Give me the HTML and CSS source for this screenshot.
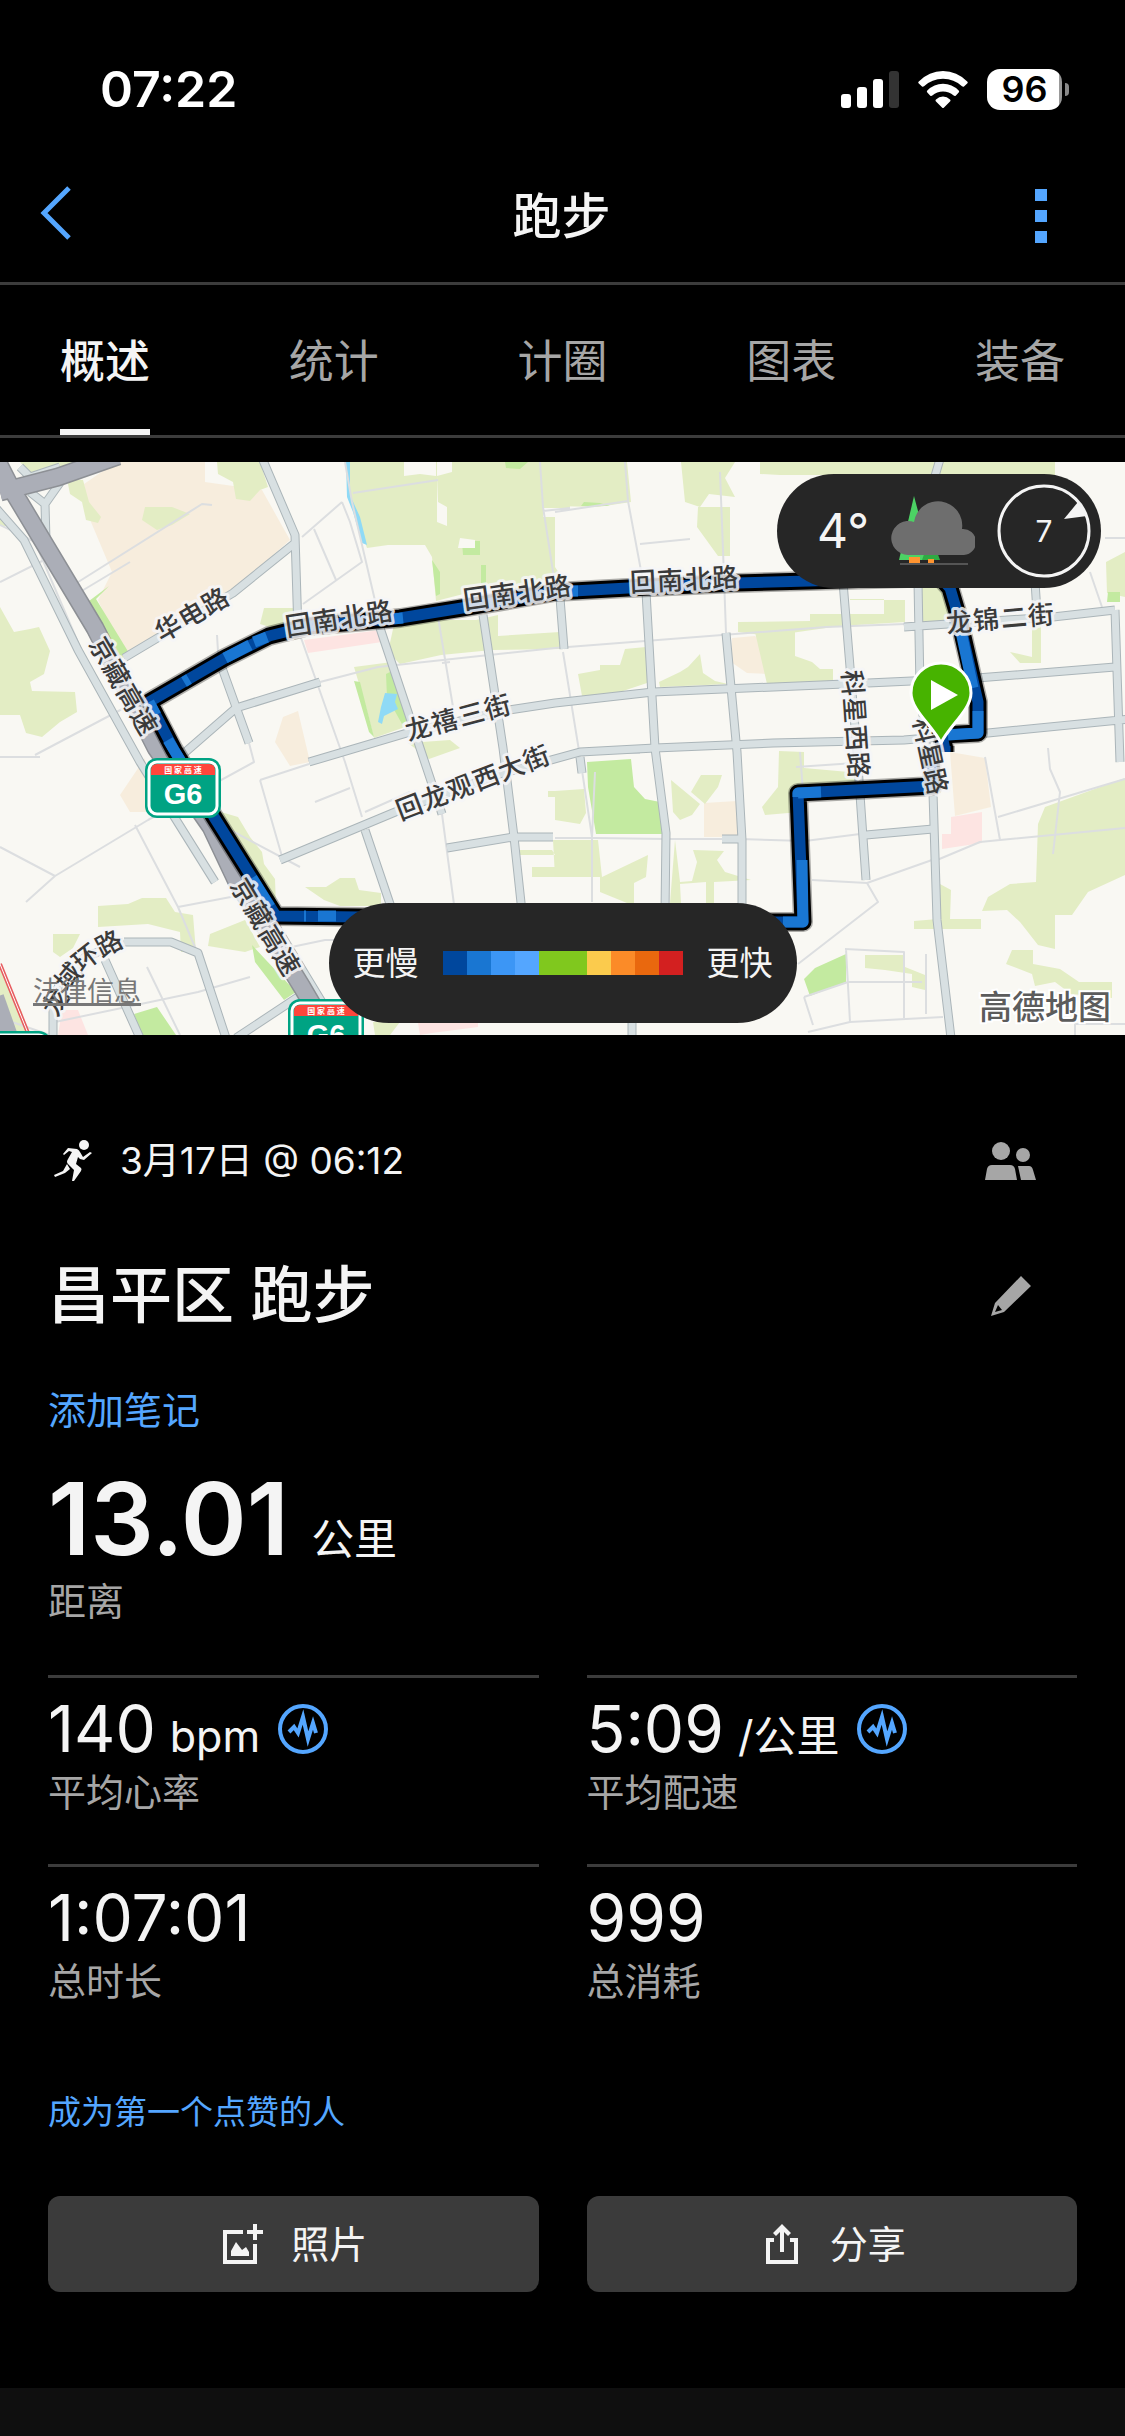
FILE: index.html
```html
<!DOCTYPE html>
<html lang="zh-CN">
<head>
<meta charset="utf-8">
<meta name="viewport" content="width=device-width">
<title>跑步</title>
<link rel="stylesheet" href="styles.css">
</head>
<body>
<div class="status">
  <time class="clock">07:22</time>
  <div class="indicators">
    <svg class="signal" width="58" height="37" viewBox="0 0 58 37" aria-hidden="true">
      <rect y="23" width="10" height="14" rx="3"/><rect x="16" y="16" width="10" height="21" rx="3"/><rect x="32" y="8" width="10" height="29" rx="3"/><rect class="dim" x="48" width="10" height="37" rx="3"/>
    </svg>
    <svg class="wifi" width="50" height="37" viewBox="0 0 50 37" aria-hidden="true">
      <path d="M0.800 10.600Q11 0 25 0T49.200 10.600Q50.300 11.600 49.200 12.600L46 15.400Q45 16 44 15.200Q36 7.700 25 7.700T6 15.200Q5 16 4 15.400L.8 12.600Q-.3 11.600.8 10.600Z"/>
      <path d="M9.300 19.500Q16 12.700 25 12.700T40.700 19.500Q41.700 20.600 40.700 21.600L37.700 24.700Q36.700 25.500 35.700 24.600Q31 20.500 25 20.500T14.300 24.600Q13.300 25.500 12.300 24.700L9.300 21.600Q8.300 20.600 9.300 19.500Z"/>
      <path d="M18 28.500Q21 25.500 25 25.500T32 28.500Q33 29.400 32 30.500L26 36.500Q25 37.500 24 36.500L18 30.500Q17 29.400 18 28.500Z"/>
    </svg>
    <div class="battery"><span class="charge">96</span><span class="nub"></span></div>
  </div>
</div>

<header class="titlebar">
  <button class="icon-button back" aria-label="返回">
    <svg width="32" height="54" viewBox="0 0 32 54"><path d="M29 2L4 27L29 52"/></svg>
  </button>
  <h1>跑步</h1>
  <button class="icon-button more" aria-label="更多">
    <svg width="12" height="54" viewBox="0 0 12 54"><path d="M0 0h12v12H0zM0 21h12v12H0zM0 42h12v12H0z"/></svg>
  </button>
</header>

<nav class="tabs">
  <a class="tab active" href="#overview">概述</a>
  <a class="tab" href="#stats">统计</a>
  <a class="tab" href="#laps">计圈</a>
  <a class="tab" href="#charts">图表</a>
  <a class="tab" href="#gear">装备</a>
</nav>

<section class="map">
  <svg class="map-canvas" viewBox="0 0 1125 573" aria-label="路线地图">
    <defs>
      <g id="roads">
        <path d="M262 -4L295 73L298 170M295 81L233 131L124 196M380 166L418 280L442 352M483 153L503 286L514 375L522 450M560 136L564 187M182 293L236 246L320 220M222 206L249 281"/>
        <path d="M309 300L407 271L509 248L555 241L653 230L868 221L977 216L1115 205M1115 148L1120 300M280 398L400 348L500 312L580 290L655 286L773 281L904 278L988 271L1130 257"/>
        <path d="M646 130L655 286L666 371L665 450M632 555V576M726 171L737 290L742 378V450M843 120L857 290L866 418M918 120L920 226L927 290L933 331M904 165L1053 155L1115 148M866 373L933 367M447 386L513 375H553M365 368L391 445"/>
        <path d="M124 480H171L198 491L226 576M105 498L140 576M124 480L85 495L60 520L53 540V576M236 576L298 535M940 -3L935 14M1035 120L1037 150M580 295L582 311M722 377H740M933 331L937 458L951 576"/>
      </g>
      <path id="highway" d="M-10 -15L11 26L95 166L156 286L211 365L236 418L302 525L340 590M0 30L58 15L118 -6"/>
      <path id="route" d="M945 284V290M930 285L933 324L798 331L803 460L773 460L276 454L214 355L174 288L149 240L225 196L269 174L309 164L400 156L462 146L555 130L628 126L737 121L809 119L940 115L950 126L958 153L978 240V271L942 273L945 288"/>
      <g id="shield">
        <rect width="76" height="60" rx="12" fill="#00a383"/><rect x="4" y="4" width="68" height="52" rx="8" fill="none" stroke="#fff" stroke-width="3"/>
        <path d="M6 17V12Q6 6 12 6H64Q70 6 70 12V17Z" fill="#ff463c"/>
        <text class="shield-name" x="38" y="15">国 家 高 速</text><text class="shield-number" x="38" y="46">G6</text>
      </g>
    </defs>
    <rect width="1125" height="573" fill="#f9f8f3"/>
    <g class="sand">
      <path d="M84 22L116 0H205V20L262 28L290 78L232 130L124 196L98 138L112 110L91 60Z"/>
      <path d="M275 280L283 255L298 249L310 300L290 304ZM145 296L120 333L130 350H148ZM732 176L755 174L769 185V212L747 211L731 200ZM704 341L737 339L739 375H704ZM950 290L985 296L991 345L955 354Z"/>
    </g>
    <g class="pink"><path d="M304 178L380 168L382 180L308 191ZM951 355L982 350V381L942 387V372H951ZM58 573L62 548H78L88 573ZM418 561H478V565L432 571L420 573Z"/></g>
    <g class="park">
      <path d="M0 -2H87L65 9L31 13L20 0ZM67 17L83 18L89 40L101 55L98 61L86 58L82 40L70 32ZM145 45H172L190 52L172 63L157 68L142 58ZM217 0H260L268 25L260 28L250 39L236 37L233 20L218 12Z"/>
      <path d="M350 0H570V46H543V55H555V105L570 127H483L436 139L432 95L425 83H388L367 86L350 40ZM264 146H298V174L260 162ZM395 158H476L498 153V174L560 170V187L492 188L441 193L400 202L388 190Z"/>
      <path d="M0 145L14 170L30 167L39 165L50 189L44 212L30 220L32 229L75 230L77 250L60 260L42 275L26 271L20 253H0ZM221 350L238 355L250 375L262 390L264 402L275 417L276 444L266 442L250 415ZM354 205L392 200L405 265L374 276L366 245Z"/>
      <path d="M98 444L128 442L142 436L166 436L175 450L193 453L196 490H181L180 470L148 462L98 465ZM53 472H80L73 486L60 495L53 490ZM305 425L326 425L340 416H355L359 428L381 431V444H340L324 438ZM210 472L245 458L260 485L245 490L208 484ZM408 281L450 278L460 286L429 297Z"/>
      <path d="M555 0H627L631 40L598 45L555 44ZM681 0H735L725 16L735 35L709 32L700 45L685 40ZM698 45H730V94H718L697 65ZM760 0H1055V13H780L760 12Z"/>
      <path d="M578 212L600 208V203H620L625 187L646 185L650 220L620 230L582 234ZM659 220L680 210L688 205L700 192L703 211L715 219L728 222L660 225ZM738 160L810 159V152H884V137H850V138H905V160L840 164L770 174L738 170ZM755 170H795V194L812 200L820 207H833V220L767 222Z"/>
      <path d="M918 126H945L950 155L918 170ZM1032 160H1041V201H1020L1010 190L1032 195ZM1106 100L1125 90V135L1107 131ZM671 318L700 342L692 353L680 358L673 350ZM701 313H722L718 325L705 342L691 330ZM779 289L804 290V306L860 311V329L798 325L800 350L765 353L762 345L778 325Z"/>
      <path d="M555 329L584 327L586 351L580 362L555 358ZM553 378H598L602 415L648 393L646 415L634 421V441H627L600 430V415H555ZM675 378L680 420L692 419L697 400L693 388L724 389L717 398L725 410L751 418L714 420V441H706V420L680 422L681 441H670ZM552 388H514V393H555ZM532 405H555V415H532ZM548 329H575V335H548Z"/>
      <path d="M1038 362L1045 345L1125 316V413L1088 430L1072 453H1055V487L1038 483L1020 460L1007 448L982 449L988 435L1010 422L1036 420ZM940 422L951 428L950 457H981V467H914V459L938 457ZM1006 502L1012 488H1033V502L1060 507L1079 520H1112V536L1071 532L1055 520L1035 524L1032 512ZM865 493H905V505L925 513V528L912 525V512L885 508L865 506ZM373 560H400L390 573H375Z"/>
      <path d="M0 505L22 550L26 573L0 565ZM0 50L15 64H0Z"/>
    </g>
    <g class="woods"><path d="M85 142L109 124L96 137L129 191L121 197L87 145ZM462 79H480V93H463ZM505 0H528L520 7L506 6ZM432 98L440 110V132L436 134ZM481 103H486V122H481ZM386 212L394 208L408 258L402 262L387 235ZM354 219L360 220L374 275L369 270ZM587 300L631 297L634 325L645 337L660 340L662 372H596L588 325ZM252 483L296 530L284 538L255 500ZM134 552L157 545L176 573H142ZM804 517L815 506L846 492V520L810 534ZM581 44H610L600 41L584 40ZM1108 130H1120V140H1107Z"/></g>
    <path class="bare" d="M404 0H436V14L420 12L404 14ZM437 14L452 10V0H437V60L447 64V45L438 40ZM460 76L475 78V86H458Z"/>
    <g class="water"><path d="M346 0H350V33L360 55L367 83L362 81L353 50L347 35ZM385 231L397 232L395 240L398 247L384 254L382 262L378 260L381 245Z"/></g>
    <g class="lanes">
      <path d="M353 31L438 18M345 0L352 40L380 160M342 40L302 75M314 67L336 118M303 142L362 100L350 60L342 40M75 122L202 42L212 43M80 130L130 100M0 120L60 90M35 293L126 245M0 295L40 295M540 0L543 45L565 187M543 49L570 46M300 173L345 300L362 355M320 220L378 205L555 186L826 165L905 162M217 173L219 206M249 281L254 300L148 358M148 358L55 414L0 385M55 414L26 440M135 363L178 445L197 490M178 445L236 434M260 318L283 398M260 318L309 302M555 50L628 39L645 130M628 39L625 0M720 10L723 88L726 171M640 82L690 77M442 352L455 450M282 487L325 478H350M55 560L198 530L250 515"/>
      <path d="M563 190L580 295L592 375V440M555 376H595L665 377H740L805 379L860 372M812 418L867 421L878 440L798 502M867 421L932 398M985 295L1000 378L1125 366M937 398L980 380L1000 378M998 355L1125 317M1048 286L1050 307L1060 330L1053 392M1090 110L1102 145M1105 76H1125M800 290L803 330M796 305L855 301M845 487L904 490V556M846 487L850 560L808 570M804 535L848 520H922M850 560L943 555M926 492V552M804 535L813 563M595 310L592 375M438 155L453 245M442 201L450 200M365 350L410 330M315 340L350 326M580 291H640M147 505L180 573M50 573L12 560M1075 573V562L1125 562M0 63L35 80L80 185M300 405L215 360"/>
    </g>
    <path d="M-5 45L24 78L78 188L140 300L215 420M30 30L45 42L46 78L58 110L112 205M64 15L45 42M20 5L30 15L60 5M240 405L325 545L350 580" class="ramp-edge"/>
    <path d="M-5 45L24 78L78 188L140 300L215 420M30 30L45 42L46 78L58 110L112 205M64 15L45 42M20 5L30 15L60 5M240 405L325 545L350 580" class="ramp"/>
    <use href="#roads" class="road-edge"/><use href="#roads" class="road"/>
    <use href="#highway" class="highway-edge"/><use href="#highway" class="highway"/>
    <path d="M-4 535L12 580" class="highway"/><path d="M0 502L30 576" stroke="#e75c5f" stroke-width="4"/><path d="M0 502L30 576" stroke="#fff" stroke-width="1"/>
    <use href="#route" class="route-glow"/><use href="#route" class="route-edge"/><use href="#route" class="route"/>
    <path class="route-mid" d="M821 330L798 331V335M802 398L803 460H783M336 454H318M306 454H304M185 306L174 288L168 278M156 253L149 240M270 445L252 416M184 220L189 217M225 196L250 183M254 180L267 175M393 157L403 156M558 129H578M960 165L973 226M978 249V271L948 273"/>
    <use href="#shield" x="145" y="296"/><use href="#shield" x="288" y="537"/><use href="#shield" x="-25" y="569"/>
    <g class="road-names">
      <text transform="translate(339 157) rotate(-9)" x="-41 -14 14 41" y="9">回南北路</text>
      <text transform="translate(517 131) rotate(-8)" x="-41 -14 14 41" y="9">回南北路</text>
      <text transform="translate(684 118) rotate(-3)" x="-41 -14 14 41" y="9">回南北路</text>
      <text transform="translate(1000 157) rotate(-5)" x="-41 -14 14 41" y="9">龙锦二街</text>
      <text transform="translate(192 153) rotate(-30)" x="-27 0 27" y="9">华电路</text>
      <text transform="translate(458 256) rotate(-15)" x="-41 -14 14 41" y="9">龙禧三街</text>
      <text transform="translate(473 321) rotate(-21)" x="-68 -41 -14 14 41 68" y="9">回龙观西大街</text>
      <text transform="translate(123 224) rotate(60)" x="-41 -14 14 41" y="9">京藏高速</text>
      <text transform="translate(265 465) rotate(59)" x="-41 -14 14 41" y="9">京藏高速</text>
      <text transform="translate(855 262) rotate(86)" x="-41 -14 14 41" y="9">科星西路</text>
      <text transform="translate(930 294) rotate(78)" x="-26 0 26" y="9">科星路</text>
      <text transform="translate(56 540) rotate(-58)" y="9">龙</text>
      <text transform="translate(69 515) rotate(-50)" y="9">域</text>
      <text transform="translate(86 496) rotate(-38)" y="9">环</text>
      <text transform="translate(109 482) rotate(-28)" y="9">路</text>
    </g>
    <path d="M941 281C933 264 911 248 911 231A30 30 0 0 1 971 231C971 248 949 264 941 281Z" fill="#47b300" stroke="#fff" stroke-width="3"/>
    <path d="M931 218L958 233L931 248Z" fill="#fff"/>
    <text class="map-brand" x="979" y="557">高德地图</text>
  </svg>
  <a class="legal" href="#legal">法律信息</a>

  <div class="weather">
    <span class="temperature">4°</span>
    <svg width="84" height="72" viewBox="0 0 84 72" aria-label="多云">
      <path d="M23 1L40 65H8Z" fill="#4cd264"/><path d="M40 40L49 65H31Z" fill="#2faa43"/><path d="M18 62h11v7H18zM37 64h6v5H37z" fill="#ff9430"/>
      <path d="M17 60A17 17 0 1 1 23 27A24 24 0 0 1 71 34A13 13 0 1 1 73 60Z" fill="#6e6e6e"/><path d="M9 69H77" stroke="#555" stroke-width="2"/>
    </svg>
    <div class="wind">
      <svg width="94" height="94" viewBox="0 0 94 94" aria-hidden="true"><circle cx="47" cy="47" r="45" fill="none" stroke="#f4f4f4" stroke-width="3"/><path d="M67 35L81 18L90 32Z" fill="#f4f4f4"/></svg>
      <span>7</span>
    </div>
  </div>

  <div class="legend">
    <span>更慢</span>
    <div class="scale"><i class="s1"></i><i class="s2"></i><i class="s3"></i><i class="s4"></i><i class="s5"></i><i class="s5"></i><i class="s6"></i><i class="s7"></i><i class="s8"></i><i class="s9"></i></div>
    <span>更快</span>
  </div>
</section>

<main class="content" id="overview">
  <div class="row date-row">
    <div class="date">
      <svg width="39" height="42" viewBox="0 0 39 42" aria-hidden="true">
        <circle cx="30" cy="5" r="5"/>
        <path d="M14 8L23 9Q25 10 26 12L29 17L36 12L38 13L30 20L26 19L24 17L22 24L27 28Q28 29 27 31L20 41L18 41L20 30L14 24Q12 22 14 19L18 12L15 11L10 15L9 14Z"/><path d="M13 24L16 29L11 33L1 37L0 35L9 31Z"/>
      </svg>
      <span>3月17日 @ 06:12</span>
    </div>
    <button class="icon-button muted" aria-label="隐私设置">
      <svg width="66" height="42" viewBox="0 0 66 42"><circle cx="23" cy="11" r="9"/><circle cx="45" cy="15" r="7"/><path d="M7 40L9 29Q10 25 14 25H32Q36 25 37 29L39 40ZM40 26H51Q54 26 55 30L58 40H43Z"/></svg>
    </button>
  </div>
  <div class="row title-row">
    <h2>昌平区 跑步</h2>
    <button class="icon-button muted" aria-label="编辑名称">
      <svg width="66" height="42" viewBox="0 0 66 42"><path fill-rule="evenodd" d="M43 1L53 11L26 37L13 41L17 28ZM20 30L17 37L24 35Z"/></svg>
    </button>
  </div>
  <a class="note" href="#note">添加笔记</a>

  <dl class="distance">
    <dt>距离</dt>
    <dd><span>13.01</span><span class="unit">公里</span></dd>
  </dl>

  <dl class="stats" id="stats">
    <div class="stat"><dt>平均心率</dt><dd><span>140</span><span class="unit">bpm</span>
      <button class="icon-button pulse" aria-label="心率图表"><svg width="50" height="50" viewBox="0 0 50 50"><circle cx="25" cy="25" r="23"/><path d="M11 28L16 23L20 29L25 13L30 35L35 19L38 29"/></svg></button></dd></div>
    <div class="stat"><dt>平均配速</dt><dd><span>5:09</span><span class="unit">/公里</span>
      <button class="icon-button pulse" aria-label="配速图表"><svg width="50" height="50" viewBox="0 0 50 50"><circle cx="25" cy="25" r="23"/><path d="M11 28L16 23L20 29L25 13L30 35L35 19L38 29"/></svg></button></dd></div>
    <div class="stat"><dt>总时长</dt><dd><span>1:07:01</span></dd></div>
    <div class="stat"><dt>总消耗</dt><dd><span>999</span></dd></div>
  </dl>

  <a class="like" href="#like">成为第一个点赞的人</a>

  <div class="actions">
    <button class="action">
      <svg width="48" height="48" viewBox="0 0 48 48" aria-hidden="true"><path d="M4 10H24V14H8V40H34V24H38V44H4ZM34 4h4v6h6v4h-6v6h-4v-6h-6v-4h6ZM12 36V31L17 22L23 30L27 27L30 32V36Z"/></svg>
      照片
    </button>
    <button class="action">
      <svg width="48" height="48" viewBox="0 0 48 48" aria-hidden="true"><path d="M8 18H16V22H12V40H36V22H32V18H40V44H8ZM24 4L33 13L30 16L26 12V32H22V12L18 16L15 13Z"/></svg>
      分享
    </button>
  </div>
</main>
<footer class="next-section"></footer>
</body>
</html>
```
FILE: styles.css
```css
* { box-sizing: border-box; margin: 0; padding: 0; }

body {
  display: flex;
  flex-direction: column;
  min-height: 100vh;
  background: #000;
  color: #f4f4f4;
  font-family: Inter, "Noto Sans CJK SC", sans-serif;
  font-size: 38px;
  line-height: 54px;
}

button { font: inherit; color: inherit; border: 0; background: none; }
a { color: #54a6ff; text-decoration: none; }
svg { display: block; flex: none; fill: #f4f4f4; }

.status {
  display: flex;
  justify-content: space-between;
  align-items: center;
  padding: 57px 56px 23px 100px;
  line-height: 64px;
  color: #fff;
}
.clock { font-size: 50px; font-weight: 600; }
.indicators { display: flex; align-items: center; gap: 19px; }
.indicators svg { fill: #fff; }
.indicators .dim { fill: #333; }
.battery { display: flex; align-items: center; gap: 3px; }
.charge {
  width: 75px;
  border-radius: 13px;
  background: linear-gradient(90deg, #fff 72px, #999 72px);
  color: #000;
  font-size: 36px;
  font-weight: 600;
  line-height: 41px;
  text-align: center;
}
.nub { width: 4px; height: 13px; border-radius: 0 4px 4px 0; background: #888; }

.titlebar {
  display: flex;
  justify-content: space-between;
  align-items: center;
  min-height: 141px;
  padding: 0 42px 0 40px;
  border-bottom: 3px solid #3c3c3c;
}
.titlebar h1 { padding-top: 8px; font-size: 49px; font-weight: 500; }
.icon-button { display: flex; align-items: center; justify-content: center; }
.titlebar .icon-button { width: 72px; height: 72px; }
.titlebar .back { justify-content: flex-start; }
.back path { fill: none; stroke: #54a6ff; stroke-width: 5; }
.more { padding: 6px 12px 0 0; }
.more path { fill: #54a6ff; }

.tabs {
  display: flex;
  justify-content: space-between;
  padding: 0 60px;
  border-bottom: 3px solid #3c3c3c;
  font-size: 45px;
}
.tab { padding: 44px 0 40px; line-height: 66px; color: #a6a6a6; }
.tab.active { padding-bottom: 34px; border-bottom: 6px solid #f4f4f4; color: #f4f4f4; font-weight: 500; }

.map { position: relative; margin-top: 24px; }
.map-canvas { width: 100%; height: auto; overflow: hidden; }
.map-canvas use, .map-canvas path { stroke-linejoin: round; }
.bare { fill: #f9f8f3; }
.sand { fill: #f7eddd; }
.pink { fill: #fde4e2; }
.park { fill: #e3edc4; }
.woods { fill: #c3eaa0; }
.water { fill: #8fdaf6; }
.lanes { fill: none; stroke: #dcdee0; stroke-width: 2; }
.ramp-edge { fill: none; stroke: #abb5b9; stroke-width: 9; }
.ramp { fill: none; stroke: #d8e0e2; stroke-width: 7; }
.road-edge { fill: none; stroke: #abb5b9; stroke-width: 9; }
.road { fill: none; stroke: #d8e0e2; stroke-width: 7; }
.highway-edge { fill: none; stroke: #8d9095; stroke-width: 19; }
.highway { fill: none; stroke: #abaeb7; stroke-width: 16; }
.route-glow { fill: none; stroke: #000; stroke-opacity: .3; stroke-width: 20; }
.route-edge { fill: none; stroke: #000; stroke-width: 17; }
.route { fill: none; stroke: #00479d; stroke-width: 11; }
.route-mid { fill: none; stroke: #1976d2; stroke-width: 11; }
.road-names text {
  fill: #3a3a3a;
  stroke: #f6f6f8;
  stroke-opacity: .85;
  stroke-width: 6;
  stroke-linejoin: round;
  paint-order: stroke;
  font-size: 26px;
  font-weight: 500;
  text-anchor: middle;
}
.shield-name { fill: #fff; font-size: 8px; font-weight: 700; text-anchor: middle; }
.shield-number { fill: #fff; font-family: "Liberation Sans", sans-serif; font-size: 29px; font-weight: 700; text-anchor: middle; }
.map-brand { fill: #5c5c5c; stroke: #fff; stroke-width: 4; paint-order: stroke; font-size: 33px; font-weight: 500; }

.legal {
  position: absolute;
  left: 33px;
  bottom: 24px;
  color: #777;
  font-size: 27px;
  line-height: 39px;
  text-decoration: underline;
  text-decoration-thickness: 3px;
}
.weather {
  position: absolute;
  top: 12px;
  right: 24px;
  display: flex;
  align-items: center;
  gap: 22px;
  height: 114px;
  padding: 0 10px 0 40px;
  border-radius: 57px;
  background: #262626;
}
.temperature { font-size: 48px; }
.wind { display: grid; place-items: center; }
.wind > * { grid-area: 1 / 1; }
.wind span { font-size: 30px; }
.legend {
  position: absolute;
  bottom: 12px;
  left: 50%;
  transform: translateX(-50%);
  display: flex;
  align-items: center;
  gap: 24px;
  height: 120px;
  padding: 0 24px;
  border-radius: 60px;
  background: #262626;
  font-size: 33px;
  white-space: nowrap;
}
.scale { display: flex; }
.scale i { width: 24px; height: 24px; }
.s1 { background: #00479d; }
.s2 { background: #1976d2; }
.s3 { background: #3c96f5; }
.s4 { background: #54a6ff; }
.s5 { background: #80c81e; }
.s6 { background: #fbcb4d; }
.s7 { background: #fb8b28; }
.s8 { background: #e9680e; }
.s9 { background: #d32020; }

.content { padding: 84px 48px 96px; }
.row { display: flex; align-items: center; justify-content: space-between; padding-right: 33px; }
.date-row { min-height: 84px; font-size: 37px; }
.date { display: flex; align-items: center; gap: 27px; padding-left: 6px; }
.title-row { min-height: 96px; margin-top: 45px; }
.title-row h2 { font-size: 62px; font-weight: 500; line-height: 90px; }
.muted svg { fill: #a6a6a6; }
.note { display: block; margin-top: 36px; line-height: 60px; }

dl, .stat { display: flex; flex-direction: column; }
dt { color: #a6a6a6; }
dd { display: flex; align-items: baseline; order: -1; }
.unit { font-size: 43px; line-height: 48px; }
.distance { margin-top: 24px; }
.distance dd { gap: 22px; font-size: 100px; font-weight: 600; line-height: 110px; }
.distance .unit { font-weight: 400; }

.stats {
  display: grid;
  grid-template-columns: 1fr 1fr;
  column-gap: 48px;
  row-gap: 45px;
  margin-top: 47px;
}
.stat { border-top: 3px solid #3c3c3c; padding-top: 14px; }
.stat dd { height: 73px; gap: 14px; font-size: 64px; line-height: 74px; }
.pulse { align-self: center; margin-left: 4px; }
.pulse svg { fill: none; stroke: #54a6ff; stroke-width: 4; }

.like { display: block; margin-top: 77px; font-size: 33px; }
.actions { display: grid; grid-template-columns: 1fr 1fr; gap: 48px; margin-top: 57px; }
.action {
  display: flex;
  align-items: center;
  justify-content: center;
  gap: 24px;
  min-height: 96px;
  border-radius: 12px;
  background: #3b3b3b;
}
.next-section { flex: 1; min-height: 47px; background: #0f0f0f; }
```
